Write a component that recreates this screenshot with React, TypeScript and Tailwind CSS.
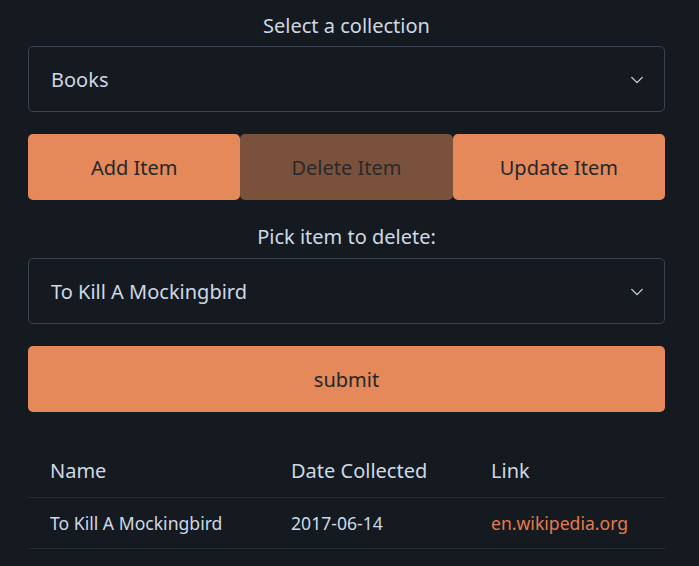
import React from 'react';

const font = { fontFamily: '"Noto Sans", "Liberation Sans", sans-serif' };

const Chevron: React.FC = () => (
  <svg width="14" height="14" viewBox="0 0 16 16" fill="none" className="text-[#c9d1d9]">
    <path d="M2 5l6 6 6-6" stroke="currentColor" strokeWidth="1.6" strokeLinecap="round" strokeLinejoin="round" />
  </svg>
);

const SelectBox: React.FC<{ value: string }> = ({ value }) => (
  <div className="flex h-[66px] items-center justify-between rounded-[5px] border border-[#3a434f] pl-[22px] pr-[20px] pt-[2px] text-[20px] text-[#cdd9e5]">
    <span>{value}</span>
    <Chevron />
  </div>
);

export default function App() {
  return (
    <div className="min-h-[566px] w-full bg-[#151920] pt-[11px]" style={font}>
      <div className="ml-[28px] w-[637px]">
        <div className="text-center text-[20px] leading-[30px] text-[#cdd9e5]">Select a collection</div>
        <div className="mt-[5px]">
          <SelectBox value="Books" />
        </div>

        <div className="mt-[22px] flex h-[66px] text-[20px] text-[#24272c]">
          <button className="flex-1 rounded-[5px] bg-[#e5895a] pt-[2px]">Add Item</button>
          <button className="flex-1 rounded-[5px] bg-[#7a513b] pt-[2px] text-[#2a2a2c]">Delete Item</button>
          <button className="flex-1 rounded-[5px] bg-[#e5895a] pt-[2px]">Update Item</button>
        </div>

        <div className="mt-[22px] text-center text-[20px] leading-[30px] text-[#cdd9e5]">Pick item to delete:</div>
        <div className="mt-[6px]">
          <SelectBox value="To Kill A Mockingbird" />
        </div>

        <button className="mt-[22px] h-[66px] w-full rounded-[5px] bg-[#e5895a] pt-[2px] text-[20px] text-[#24272c]">submit</button>

        <table className="mt-[34px] w-full border-collapse text-left text-[#cdd9e5]">
          <thead>
            <tr className="border-b border-[#262c35]">
              <th className="w-[241px] pl-[22px] pb-[11px] pt-[10px] text-[20px] font-normal">Name</th>
              <th className="w-[200px] pl-[22px] pb-[11px] pt-[10px] text-[20px] font-normal">Date Collected</th>
              <th className="pl-[22px] pb-[11px] pt-[10px] text-[20px] font-normal">Link</th>
            </tr>
          </thead>
          <tbody>
            <tr className="border-b border-[#262c35]">
              <td className="pl-[22px] pt-[12px] pb-[12px] text-[17.6px]">To Kill A Mockingbird</td>
              <td className="pl-[22px] pt-[12px] pb-[12px] text-[17.6px]">2017-06-14</td>
              <td className="pl-[22px] pt-[12px] pb-[12px] text-[17.6px]">
                <a href="#" className="text-[#e57b4b]">en.wikipedia.org</a>
              </td>
            </tr>
          </tbody>
        </table>
      </div>
    </div>
  );
}
